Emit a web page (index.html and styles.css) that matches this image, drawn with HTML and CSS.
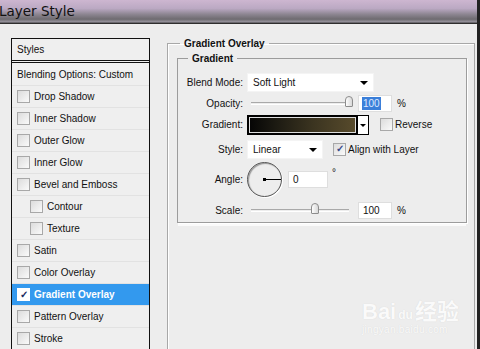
FILE: index.html
```html
<!DOCTYPE html>
<html lang="en">
<head>
  <meta charset="UTF-8">
  <title>Layer Style</title>
  <link rel="stylesheet" href="styles.css">
</head>
<body>
  <div class="titlebar"><span>Layer Style</span></div>

  <div class="dialog">
    <ul class="styles-list">
      <li class="head">Styles</li>
      <li class="blend">Blending Options: Custom</li>
      <li><span class="cb"></span>Drop Shadow</li>
      <li><span class="cb"></span>Inner Shadow</li>
      <li><span class="cb"></span>Outer Glow</li>
      <li><span class="cb"></span>Inner Glow</li>
      <li><span class="cb"></span>Bevel and Emboss</li>
      <li class="sub"><span class="cb"></span>Contour</li>
      <li class="sub"><span class="cb"></span>Texture</li>
      <li><span class="cb"></span>Satin</li>
      <li><span class="cb"></span>Color Overlay</li>
      <li class="active"><span class="cb on">✓</span>Gradient Overlay</li>
      <li><span class="cb"></span>Pattern Overlay</li>
      <li><span class="cb"></span>Stroke</li>
    </ul>

    <fieldset class="outer">
      <legend>Gradient Overlay</legend>
      <fieldset class="inner">
        <legend>Gradient</legend>

        <div class="row r-blend">
          <label>Blend Mode:</label>
          <div class="select wide">Soft Light<span class="arrow"></span></div>
        </div>

        <div class="row r-opacity">
          <label>Opacity:</label>
          <div class="slider"><span class="thumb" style="left: 94px"></span></div>
          <div class="num"><span class="sel">100</span></div>
          <span class="unit">%</span>
        </div>

        <div class="row r-grad">
          <label>Gradient:</label>
          <div class="swatch"></div>
          <div class="drop"><span class="arrow"></span></div>
          <span class="cb"></span><span class="cb-label">Reverse</span>
        </div>

        <div class="row r-style">
          <label>Style:</label>
          <div class="select short">Linear<span class="arrow"></span></div>
          <span class="cb on">✓</span><span class="cb-label">Align with Layer</span>
        </div>

        <div class="row r-angle">
          <label>Angle:</label>
          <div class="dial"><span class="hand"></span></div>
          <div class="num angle">0</div>
          <span class="deg">°</span>
        </div>

        <div class="row r-scale">
          <label>Scale:</label>
          <div class="slider"><span class="thumb" style="left: 60px"></span></div>
          <div class="num">100</div>
          <span class="unit">%</span>
        </div>
      </fieldset>
    </fieldset>
  </div>

  <div class="watermark">
    <div class="wm-main">Bai<span class="paw">du</span>经验</div>
    <div class="wm-url">jingyan.baidu.com</div>
  </div>
</body>
</html>
```

FILE: styles.css
```css
* { margin: 0; padding: 0; box-sizing: border-box; }
html, body { overflow: hidden; }
body {
  width: 480px;
  height: 349px;
  background: #ededed;
  font-family: 'Liberation Sans', Arial, sans-serif;
  font-size: 10px;
  color: #111;
  position: relative;
}
.titlebar {
  height: 24px;
  padding: 3px 0 0 0;
  background: linear-gradient(to bottom, #cdb6d0 0%, #bba9c3 35%, #8c8590 60%, #6e6b70 80%, #9a96a0 92%, #2e2e2e 96%);
  border-right: 3px solid #222;
}
.titlebar span {
  font-family: 'DejaVu Sans', sans-serif;
  font-size: 13.5px;
  color: #111;
  margin-left: -1px;
}
.dialog {
  display: flex;
  align-items: flex-start;
  padding: 14px 0 0 11px;
  border-right: 3px solid #222;
  height: 325px;
}

/* left list */
.styles-list {
  list-style: none;
  width: 139px;
  border: 1px solid #111;
  border-bottom: none;
  height: 311px;
  overflow: hidden;
}
.styles-list li {
  height: 22px;
  display: flex;
  align-items: center;
  padding-left: 5px;
  border-bottom: 1px solid #e2e2e2;
  background: #efefef;
  white-space: nowrap;
}
.styles-list li.head {
  height: 24px;
  border-bottom: 3px double #111;
}
.styles-list li.blend { height: 23px; }
.styles-list li.sub { padding-left: 18px; }
.styles-list li.active {
  background: #3399ee;
  color: #fff;
  font-weight: bold;
}
.cb {
  width: 13px;
  height: 13px;
  border: 1px solid #a8a8a8;
  background: linear-gradient(135deg, #dcdcdc, #fafafa);
  margin-right: 4px;
  flex: none;
  display: inline-flex;
  align-items: center;
  justify-content: center;
  font-size: 10px;
  line-height: 1;
  font-weight: bold;
  color: #2a3a78;
}
.styles-list li.active .cb { background: #fff; border-color: #fff; color: #1a2a60; }

/* right panel */
.outer {
  margin-left: 17px;
  width: 308px;
  height: 311px;
  border: 1px solid #a8a8a8;
  border-bottom: none;
  box-shadow: inset 1px 1px 0 #fff;
  padding: 0 7px 0 9px;
}
.outer > legend {
  font-weight: bold;
  margin-left: 3px;
  padding: 0 4px;
}
.inner {
  margin-top: 4px;
  height: 170px;
  border: 1px solid #9c9c9c;
  box-shadow: 1px 1px 0 #fff, 0 4px 0 -1px #fafafa;
  padding: 0 6px;
}
.inner > legend {
  font-weight: bold;
  margin-left: 4px;
  padding: 0 4px;
}
.row {
  display: flex;
  align-items: center;
  height: 21px;
  white-space: nowrap;
}
.row label {
  width: 59px;
  text-align: right;
  margin-right: 4px;
  flex: none;
}
.r-blend { margin-top: 8px; }
.r-style { margin-top: 3px; height: 22px; }
.r-angle { height: 37px; margin-top: 1px; }
.r-scale { margin-top: 2px; }

.select {
  height: 19px;
  background: #fff;
  border: 1px solid #f4f4f4;
  padding-left: 5px;
  display: flex;
  align-items: center;
  position: relative;
}
.select.wide { width: 127px; }
.select.short { width: 76px; }
.arrow {
  position: absolute;
  right: 5px;
  top: 7px;
  border-left: 4px solid transparent;
  border-right: 4px solid transparent;
  border-top: 4px solid #000;
}

.slider {
  width: 98px;
  height: 3px;
  margin-left: 4px;
  border-top: 1px solid #a9a9a9;
  border-bottom: 1px solid #fff;
  position: relative;
}
.thumb {
  position: absolute;
  top: -7px;
  width: 8px;
  height: 11px;
  border: 1px solid #8c8c8c;
  border-radius: 4px 4px 1px 1px;
  background: linear-gradient(to right, #fdfdfd, #d8d8d8);
}
.num {
  height: 17px;
  width: 34px;
  margin-left: 9px;
  background: #fff;
  border: 1px solid #dedede;
  padding-left: 4px;
  display: flex;
  align-items: center;
}
.num .sel {
  background: #3b7fd9;
  color: #dfe9ff;
  padding: 1px 1px;
  margin-left: -1px;
}
.unit { margin-left: 5px; }

.swatch {
  width: 111px;
  height: 20px;
  border: 2px solid #000;
  box-shadow: inset 0 0 0 1px #ddd;
  background: linear-gradient(to right, #050505 0%, #1c1a12 25%, #3b3420 60%, #584b2c 100%);
}
.drop {
  width: 11px;
  height: 20px;
  border: 1px solid #000;
  border-left: none;
  background: #fff;
  position: relative;
  margin-right: 11px;
}
.drop .arrow { right: 2px; top: 8px; border-width: 3px; }
.r-grad .cb { margin-right: 2px; }
.r-style .select { margin-right: 10px; }
.r-style .cb { margin-right: 2px; color: #3a4a8a; }

.dial {
  width: 35px;
  height: 35px;
  border-radius: 50%;
  border: 1px solid #555;
  box-shadow: 1px 1px 0 #fff, inset 1px 1px 1px #999;
  position: relative;
  flex: none;
}
.hand {
  position: absolute;
  left: 16px;
  top: 16px;
  width: 17px;
  height: 1px;
  background: #000;
}
.hand::before {
  content: '';
  position: absolute;
  left: -1px;
  top: -1px;
  width: 3px;
  height: 3px;
  background: #000;
}
.num.angle { width: 40px; margin-left: 6px; }
.deg { margin-left: 4px; align-self: flex-start; margin-top: 6px; }

.watermark {
  position: absolute;
  left: 362px;
  top: 293px;
  color: #fafafa;
  text-shadow: 0 0 1px #d2d2d2;
}
.wm-main {
  font-size: 22px;
  font-weight: bold;
  font-family: 'Liberation Sans', 'Noto Sans CJK SC', sans-serif;
}
.wm-main .paw {
  font-size: 12px;
  margin: 0 2px;
}
.wm-url {
  font-size: 10px;
  margin-top: -1px;
  letter-spacing: 0.3px;
}
```
